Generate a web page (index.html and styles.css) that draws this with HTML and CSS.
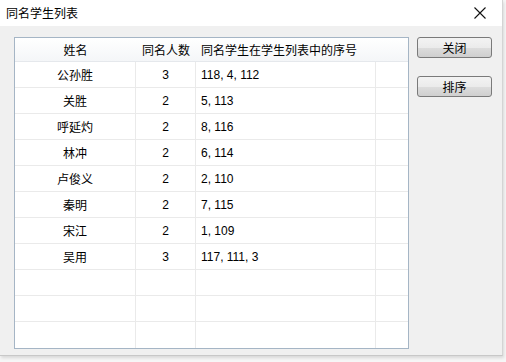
FILE: index.html
```html
<!DOCTYPE html>
<html lang="zh-CN">
<head>
    <meta charset="utf-8">
    <title>同名学生列表</title>
    <link rel="stylesheet" href="styles.css">
</head>
<body>
    <div class="window">
        <div class="titlebar">
            <span class="title">同名学生列表</span>
            <span class="close-x">
                <svg width="12" height="12" viewBox="0 0 12 12">
                    <path d="M0.5 0.5 L11.5 11.5 M11.5 0.5 L0.5 11.5" stroke="#111" stroke-width="1.1" fill="none"/>
                </svg>
            </span>
        </div>
        <div class="content">
            <div class="list-box">
                <table class="list">
                    <thead>
                        <tr>
                            <th class="col-name">姓名</th>
                            <th class="col-count">同名人数</th>
                            <th class="col-index">同名学生在学生列表中的序号</th>
                            <th class="col-rest"></th>
                        </tr>
                    </thead>
                    <tbody>
                        <tr><td class="c">公孙胜</td><td class="c num">3</td><td>118, 4, 112</td><td></td></tr>
                        <tr><td class="c">关胜</td><td class="c num">2</td><td>5, 113</td><td></td></tr>
                        <tr><td class="c">呼延灼</td><td class="c num">2</td><td>8, 116</td><td></td></tr>
                        <tr><td class="c">林冲</td><td class="c num">2</td><td>6, 114</td><td></td></tr>
                        <tr><td class="c">卢俊义</td><td class="c num">2</td><td>2, 110</td><td></td></tr>
                        <tr><td class="c">秦明</td><td class="c num">2</td><td>7, 115</td><td></td></tr>
                        <tr><td class="c">宋江</td><td class="c num">2</td><td>1, 109</td><td></td></tr>
                        <tr><td class="c">吴用</td><td class="c num">3</td><td>117, 111, 3</td><td></td></tr>
                        <tr><td></td><td></td><td></td><td></td></tr>
                        <tr><td></td><td></td><td></td><td></td></tr>
                        <tr class="last"><td></td><td></td><td></td><td></td></tr>
                    </tbody>
                </table>
            </div>
            <div class="buttons">
                <button class="btn">关闭</button>
                <button class="btn">排序</button>
            </div>
        </div>
    </div>
</body>
</html>
```

FILE: styles.css
```css
html, body {
    margin: 0;
    padding: 0;
}
body {
    width: 506px;
    height: 362px;
    background: #f6f6f6;
    font-family: "Noto Sans CJK SC", "Liberation Sans", sans-serif;
    font-size: 12px;
    color: #000;
    overflow: hidden;
}
.window {
    width: 503px;
    height: 356px;
    background: #f0f0f0;
    border-right: 1px solid #d4d4d4;
    border-bottom: 1px solid #c8c8c8;
    box-sizing: border-box;
    box-shadow: 1px 2px 3px rgba(0, 0, 0, 0.12);
}
.titlebar {
    height: 26px;
    background: #fff;
    display: flex;
    align-items: center;
    justify-content: space-between;
    padding: 0 16px 0 6px;
}
.title {
    font-size: 12px;
    line-height: 12px;
}
.close-x {
    display: flex;
    width: 12px;
    height: 12px;
}
.content {
    display: flex;
    align-items: flex-start;
    padding: 11px 0 0 14px;
    gap: 8px;
}
.list-box {
    border: 1px solid #a5b5c5;
    background: #fff;
    width: 393px;
    height: 310px;
    overflow: hidden;
}
.list {
    border-collapse: separate;
    border-spacing: 0;
    table-layout: fixed;
    width: 393px;
}
.list th {
    height: 24px;
    box-sizing: border-box;
    padding: 0;
    font-weight: normal;
    border-bottom: 1px solid #e5e8ec;
    background: linear-gradient(#ffffff, #f4f6f8);
    white-space: nowrap;
}
.col-name { width: 121px; }
.col-count { width: 60px; }
.col-index { width: 180px; text-align: left; padding-left: 5px !important; }
.col-rest { width: 32px; }
.list td {
    height: 26px;
    box-sizing: border-box;
    padding: 0 0 0 5px;
    border-right: 1px solid #eaeaea;
    border-bottom: 1px solid #eaeaea;
    font-family: "Liberation Sans", sans-serif;
    font-size: 12px;
    white-space: nowrap;
}
.list td.c {
    text-align: center;
    padding: 0;
    font-family: "Noto Sans CJK SC", sans-serif;
}
.list td.num {
    font-family: "Liberation Sans", sans-serif;
}
.list td:last-child {
    border-right: none;
}
.list tr.last td {
    border-bottom: none;
}
.buttons {
    display: flex;
    flex-direction: column;
    gap: 18px;
}
.btn {
    width: 75px;
    height: 21px;
    padding: 0;
    font-family: "Noto Sans CJK SC", sans-serif;
    font-size: 12px;
    color: #000;
    border: 1px solid #7a7a7a;
    border-radius: 3px;
    background: linear-gradient(#f3f3f3 0%, #ebebeb 50%, #dddddd 51%, #cfcfcf 100%);
}
```
